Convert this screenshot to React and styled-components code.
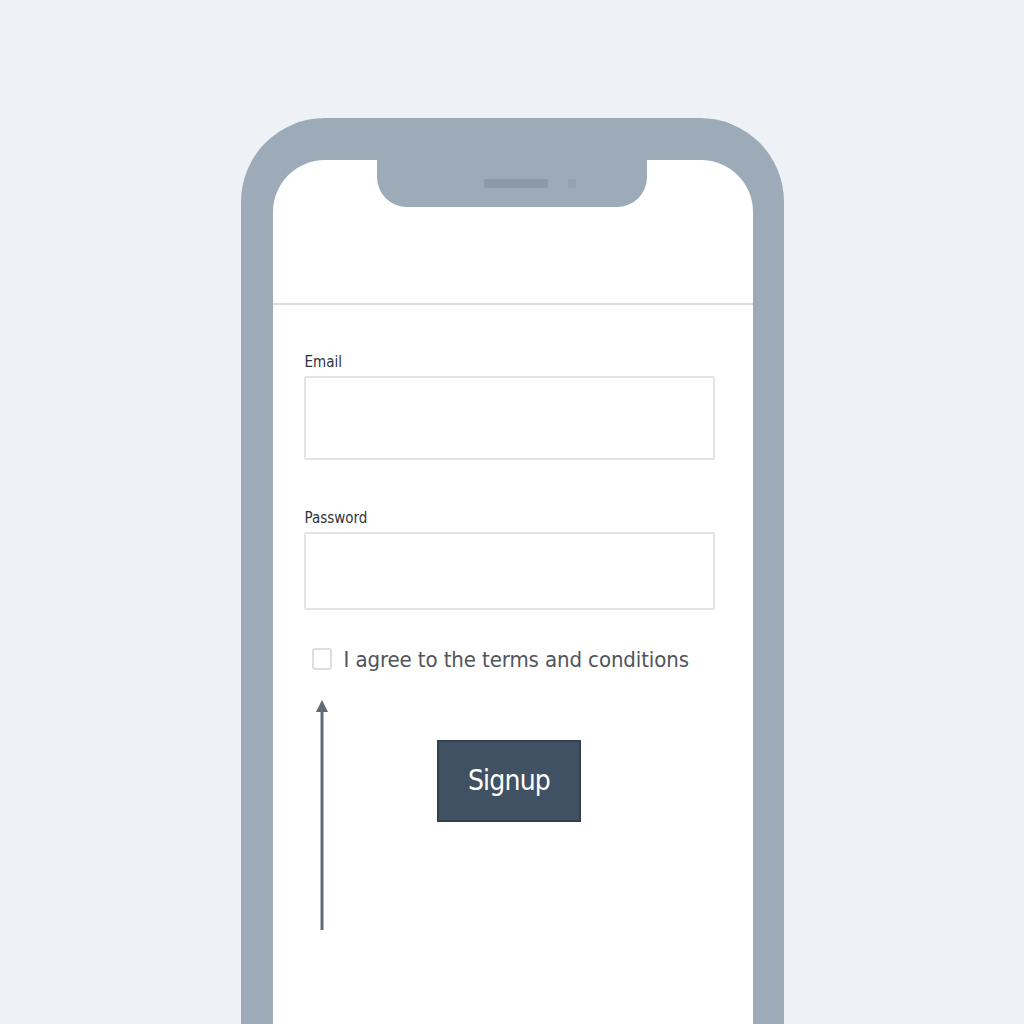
import React from 'react';
import styled, { createGlobalStyle } from 'styled-components';

const GlobalStyle = createGlobalStyle`
  html, body {
    margin: 0;
    padding: 0;
    background: #eef2f6;
  }
  * {
    box-sizing: border-box;
  }
`;

const Page = styled.div`
  width: 1024px;
  height: 1024px;
  overflow: hidden;
  display: flex;
  justify-content: center;
  padding-top: 118px;
  background: #eef2f6;
  font-family: "DejaVu Sans Condensed", "DejaVu Sans", sans-serif;
`;

const Phone = styled.div`
  width: 543px;
  height: 960px;
  padding: 42px 31px 0 32px;
  background: #9dabb8;
  border-radius: 84px 84px 0 0;
  display: flex;
`;

const Screen = styled.div`
  flex: 1;
  background: #ffffff;
  border-radius: 52px 52px 0 0;
  display: flex;
  flex-direction: column;
`;

const Header = styled.div`
  height: 145px;
  border-bottom: 2px solid #dadde0;
  display: flex;
  justify-content: center;
`;

const Notch = styled.div`
  width: 270px;
  height: 47px;
  margin-left: -2px;
  background: #9dabb8;
  border-radius: 0 0 30px 30px;
  display: flex;
  justify-content: center;
  align-items: center;
  gap: 20px;
  padding-left: 36px;
`;

const Speaker = styled.div`
  width: 64px;
  height: 9px;
  border-radius: 2px;
  background: #8c9aa8;
`;

const Camera = styled.div`
  width: 8px;
  height: 9px;
  border-radius: 2px;
  background: #95a3b0;
`;

const Form = styled.div`
  padding: 48px 38px 0 31px;
  display: flex;
  flex-direction: column;
`;

const Label = styled.label`
  display: block;
  font-size: 15px;
  line-height: 18px;
  color: #2f343a;
  margin-left: 1px;
  margin-bottom: 5px;
`;

const Field = styled.div`
  margin-bottom: ${p => p.$gap}px;
`;

const Input = styled.div`
  height: ${p => p.$h}px;
  border: 2px solid #e1e3e5;
  border-radius: 2px;
  background: #fff;
`;

const CheckRow = styled.div`
  display: flex;
  align-items: center;
  gap: 12px;
  padding-left: 8px;
  height: 24px;
`;

const Box = styled.div`
  width: 20px;
  height: 22px;
  border: 2px solid #dcdee0;
  border-radius: 3px;
`;

const CheckText = styled.span`
  font-size: 22px;
  color: #50555b;
  letter-spacing: -0.1px;
`;

const Lower = styled.div`
  margin-top: 27px;
  display: grid;
`;

const Arrow = styled.svg`
  grid-area: 1 / 1;
  justify-self: start;
  margin-left: 11px;
`;

const Button = styled.div`
  grid-area: 1 / 1;
  justify-self: center;
  align-self: start;
  margin-top: 42px;
  width: 144px;
  height: 82px;
  background: #3f5163;
  border: 2px solid #34404c;
  color: #ffffff;
  font-size: 28px;
  letter-spacing: -0.8px;
  display: flex;
  align-items: center;
  justify-content: center;
  padding-bottom: 2px;
`;

export default function App() {
  return (
    <>
      <GlobalStyle />
      <Page>
        <Phone>
          <Screen>
            <Header>
              <Notch>
                <Speaker />
                <Camera />
              </Notch>
            </Header>
            <Form>
              <Field $gap={49}>
                <Label>Email</Label>
                <Input $h={84} />
              </Field>
              <Field $gap={37}>
                <Label>Password</Label>
                <Input $h={78} />
              </Field>
              <CheckRow>
                <Box />
                <CheckText>I agree to the terms and conditions</CheckText>
              </CheckRow>
              <Lower>
                <Arrow width="14" height="235" viewBox="0 0 14 235">
                  <path d="M7 12 V232" stroke="#5f6a76" strokeWidth="3" />
                  <path d="M1 14 L7 2 L13 14 Z" fill="#5f6a76" />
                </Arrow>
                <Button>Signup</Button>
              </Lower>
            </Form>
          </Screen>
        </Phone>
      </Page>
    </>
  );
}
